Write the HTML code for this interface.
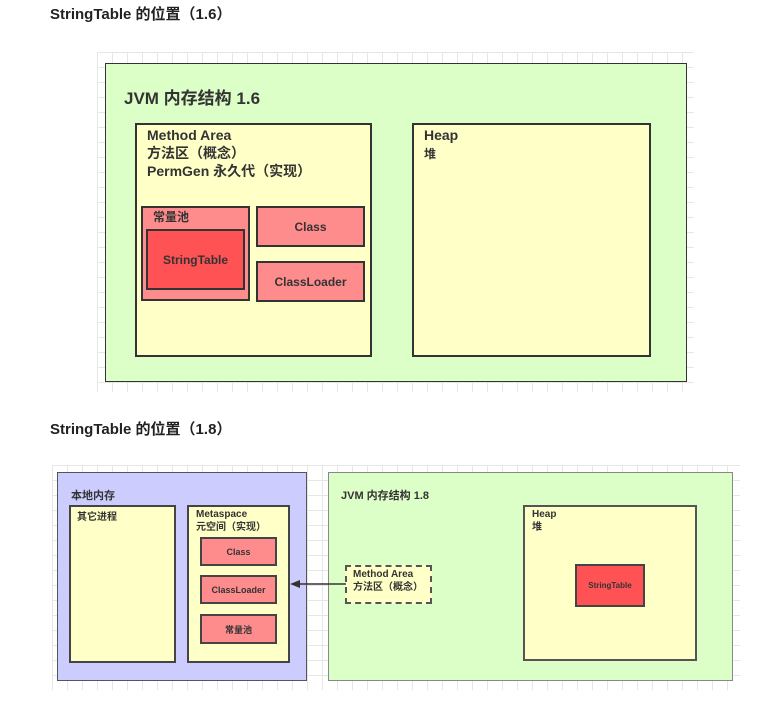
<!DOCTYPE html>
<html><head><meta charset="utf-8"><style>
*{margin:0;padding:0;box-sizing:border-box}
body{width:780px;height:708px;background:#fff;position:relative;font-family:"Liberation Sans","Noto Sans CJK SC",sans-serif;color:#333;overflow:hidden}
.a{position:absolute}
.t{font-weight:bold;font-size:15px;color:#222}
.grid{background-color:#fff;background-image:linear-gradient(#e6e6e6 1px,transparent 1px),linear-gradient(90deg,#e6e6e6 1px,transparent 1px);background-size:15px 15px}
.b{position:absolute;border:2px solid #333;font-weight:bold}
.y{background:#ffffc8}
.r{background:#ff8c8c}
.rr{background:#ff5254}
.c{display:flex;align-items:center;justify-content:center}
</style></head><body>
<div class="a t" style="left:50px;top:3px">StringTable 的位置（1.6）</div>
<div class="a grid" style="left:97px;top:52px;width:597px;height:340px"></div>
<div class="b" style="left:105px;top:63px;width:582px;height:319px;background:#dcffc8;border-width:1px"></div>
<div class="a" style="left:124px;top:84px;font-size:17px;font-weight:bold">JVM 内存结构 1.6</div>
<div class="b y" style="left:135px;top:123px;width:237px;height:234px;font-size:14px;line-height:18px;padding:1px 0 0 10px">Method Area<br>方法区（概念）<br>PermGen 永久代（实现）</div>
<div class="b y" style="left:412px;top:123px;width:239px;height:234px;font-size:14px;line-height:18px;padding:1px 0 0 10px">Heap<br><span style="font-size:12px">堆</span></div>
<div class="b r" style="left:141px;top:206px;width:109px;height:95px;font-size:12px;padding:0 0 0 10px">常量池</div>
<div class="b rr c" style="left:146px;top:229px;width:99px;height:61px;font-size:12px">StringTable</div>
<div class="b r c" style="left:256px;top:206px;width:109px;height:41px;font-size:12px">Class</div>
<div class="b r c" style="left:256px;top:261px;width:109px;height:41px;font-size:12px">ClassLoader</div>

<div class="a t" style="left:50px;top:418px">StringTable 的位置（1.8）</div>
<div class="a grid" style="left:52px;top:465px;width:688px;height:225px"></div>
<div class="b" style="left:57px;top:472px;width:250px;height:209px;background:#ccccff;border:1px solid #555;font-size:11px;padding:14px 0 0 13px">本地内存</div>
<div class="b y" style="left:69px;top:505px;width:107px;height:158px;border:2px solid #444;font-size:10px;padding:1px 0 0 6px">其它进程</div>
<div class="b y" style="left:187px;top:505px;width:103px;height:158px;border:2px solid #444;font-size:10px;line-height:13px;padding:1px 0 0 7px">Metaspace<br>元空间（实现）</div>
<div class="b r c" style="left:200px;top:537px;width:77px;height:29px;border:2px solid #444;font-size:9px">Class</div>
<div class="b r c" style="left:200px;top:575px;width:77px;height:29px;border:2px solid #444;font-size:9px">ClassLoader</div>
<div class="b r c" style="left:200px;top:614px;width:77px;height:30px;border:2px solid #444;font-size:9px">常量池</div>
<div class="b" style="left:328px;top:472px;width:405px;height:209px;background:#dcffc8;border:1px solid #888;font-size:11px;padding:14px 0 0 12px">JVM 内存结构 1.8</div>
<div class="b y" style="left:345px;top:565px;width:87px;height:39px;border:2px dashed #555;font-size:10px;line-height:13px;padding:1px 0 0 6px">Method Area<br>方法区（概念）</div>
<div class="b y" style="left:523px;top:505px;width:174px;height:156px;border:2px solid #555;font-size:10px;line-height:13px;padding:1px 0 0 7px">Heap<br>堆</div>
<div class="b rr c" style="left:575px;top:564px;width:70px;height:43px;border:2px solid #444;font-size:8px">StringTable</div>
<svg class="a" style="left:288px;top:578px" width="60" height="12"><line x1="10" y1="6" x2="58" y2="6" stroke="#333" stroke-width="1.5"/><polygon points="2,6 12,2 12,10" fill="#333"/></svg>
</body></html>
